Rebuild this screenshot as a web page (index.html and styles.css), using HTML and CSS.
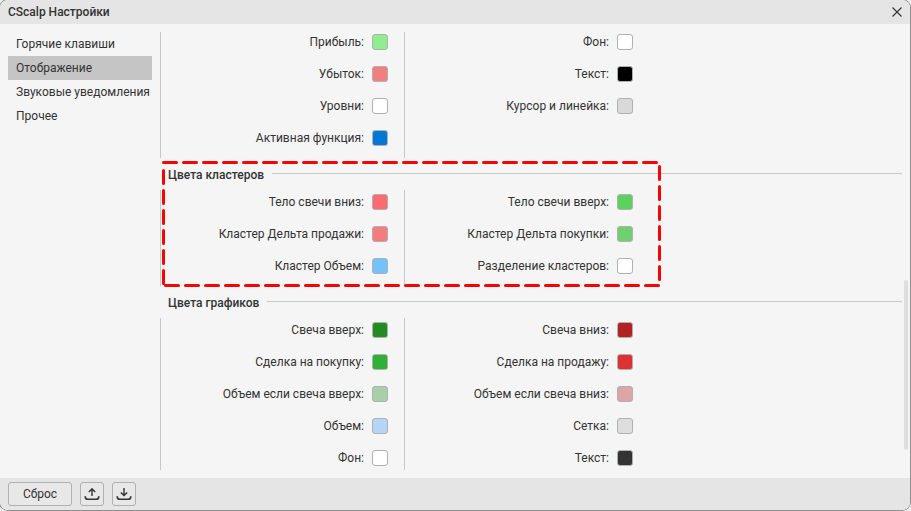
FILE: index.html
```html
<!DOCTYPE html>
<html lang="ru">
<head>
<meta charset="utf-8">
<title>CScalp Настройки</title>
<link rel="stylesheet" href="styles.css">
</head>
<body>
<div class="window">
  <header class="titlebar">
    <span class="title">CScalp Настройки</span>
    <svg class="close" width="10" height="10" viewBox="0 0 10 10"><path d="M.5.5l9 9M9.5.5l-9 9" stroke="#333" stroke-width="1.1" fill="none"/></svg>
  </header>
  <div class="body">
    <nav class="nav">
      <div class="nav-item">Горячие клавиши</div>
      <div class="nav-item active">Отображение</div>
      <div class="nav-item">Звуковые уведомления</div>
      <div class="nav-item">Прочее</div>
    </nav>
    <main class="content">
      <section class="grid first">
        <div class="col">
          <div class="row"><span>Прибыль:</span><i class="sw c-profit"></i></div>
          <div class="row"><span>Убыток:</span><i class="sw c-loss"></i></div>
          <div class="row"><span>Уровни:</span><i class="sw c-white"></i></div>
          <div class="row"><span>Активная функция:</span><i class="sw c-active"></i></div>
        </div>
        <div class="col">
          <div class="row"><span>Фон:</span><i class="sw c-white"></i></div>
          <div class="row"><span>Текст:</span><i class="sw c-black"></i></div>
          <div class="row"><span>Курсор и линейка:</span><i class="sw c-cursor"></i></div>
        </div>
      </section>
      <h3 class="heading"><span class="heading-text">Цвета кластеров</span></h3>
      <section class="grid">
        <div class="col">
          <div class="row"><span>Тело свечи вниз:</span><i class="sw c-cdown"></i></div>
          <div class="row"><span>Кластер Дельта продажи:</span><i class="sw c-dsell"></i></div>
          <div class="row"><span>Кластер Объем:</span><i class="sw c-cvol"></i></div>
        </div>
        <div class="col">
          <div class="row"><span>Тело свечи вверх:</span><i class="sw c-cup"></i></div>
          <div class="row"><span>Кластер Дельта покупки:</span><i class="sw c-dbuy"></i></div>
          <div class="row"><span>Разделение кластеров:</span><i class="sw c-white"></i></div>
        </div>
      </section>
      <h3 class="heading"><span class="heading-text">Цвета графиков</span></h3>
      <section class="grid last">
        <div class="col">
          <div class="row"><span>Свеча вверх:</span><i class="sw c-gup"></i></div>
          <div class="row"><span>Сделка на покупку:</span><i class="sw c-buy"></i></div>
          <div class="row"><span>Объем если свеча вверх:</span><i class="sw c-volup"></i></div>
          <div class="row"><span>Объем:</span><i class="sw c-vol"></i></div>
          <div class="row"><span>Фон:</span><i class="sw c-white"></i></div>
        </div>
        <div class="col">
          <div class="row"><span>Свеча вниз:</span><i class="sw c-gdown"></i></div>
          <div class="row"><span>Сделка на продажу:</span><i class="sw c-sell"></i></div>
          <div class="row"><span>Объем если свеча вниз:</span><i class="sw c-voldown"></i></div>
          <div class="row"><span>Сетка:</span><i class="sw c-grid"></i></div>
          <div class="row"><span>Текст:</span><i class="sw c-text"></i></div>
        </div>
      </section>
      <div class="scrollbar"></div>
    </main>
  </div>
  <footer class="footer">
    <button class="btn reset">Сброс</button>
    <button class="btn icon" aria-label="Экспорт">
      <svg width="16" height="14" viewBox="0 0 16 14" fill="none" stroke="#333" stroke-width="1.4"><path d="M8 9V2M4.8 5 8 1.8 11.2 5"/><path d="M1.2 9.2c0 2 1 3.1 2.6 3.1h8.4c1.6 0 2.6-1.1 2.6-3.1" stroke-width="1.6"/></svg>
    </button>
    <button class="btn icon" aria-label="Импорт">
      <svg width="16" height="14" viewBox="0 0 16 14" fill="none" stroke="#333" stroke-width="1.4"><path d="M8 1v7.4M4.8 5.4 8 8.6l3.2-3.2"/><path d="M1.2 9.2c0 2 1 3.1 2.6 3.1h8.4c1.6 0 2.6-1.1 2.6-3.1" stroke-width="1.6"/></svg>
    </button>
  </footer>
  <svg class="highlight" width="504" height="130" viewBox="0 0 504 130"><path d="M3.5 3.5H499.5M499.5 7.5V125M3.5 124.5V7M5.5 126.5H500" fill="none" stroke="#ff0000" stroke-width="3" stroke-linecap="round" stroke-dasharray="13 7"/></svg>
</div>
</body>
</html>
```
FILE: styles.css
```css
* { box-sizing: border-box; }
html, body { margin: 0; height: 100%; }
body {
  width: 911px;
  height: 511px;
  overflow: hidden;
  background: #eeeeee;
  font-family: Roboto, "Liberation Sans", sans-serif;
  font-size: 12px;
  color: #333;
}
.window {
  position: relative;
  width: 910px;
  height: 510px;
  background: #f5f5f5;
  border-radius: 8px;
  box-shadow: 0 0 0 1px #8f8f8f;
  overflow: hidden;
  display: flex;
  flex-direction: column;
}
.titlebar {
  flex: none;
  height: 24px;
  background: #e5e5e5;
  padding: 0 8px;
  display: flex;
  align-items: center;
  justify-content: space-between;
}
.title { font-weight: 500; font-size: 12px; }
.body { flex: 1; display: flex; min-height: 0; }
.nav { flex: none; width: 160px; padding: 8px 8px 0; }
.nav-item { height: 24px; line-height: 24px; padding-left: 8px; }
.nav-item.active { background: #c5c5c5; }
.content {
  position: relative;
  flex: 1;
  min-width: 0;
  padding-top: 8px;
}
.grid {
  display: grid;
  grid-template-columns: 244px 229px;
}
.col {
  display: flex;
  flex-direction: column;
  gap: 16px;
  padding: 4px 0 12px;
  border-left: 1px solid #c8c8c8;
}
.first .col { padding-top: 2px; }
.last .col { padding-bottom: 4px; }
.row {
  height: 16px;
  display: flex;
  align-items: center;
  justify-content: flex-end;
  gap: 8px;
}
.col:first-child .row { padding-right: 16px; }
.sw {
  display: block;
  width: 16px;
  height: 16px;
  border: 1px solid #b0b0b0;
  border-radius: 3px;
  flex: none;
}
.heading {
  margin: 8px 0 8px 8px;
  width: 734px;
  height: 16px;
  font-size: 12px;
  font-weight: 500;
  display: flex;
  align-items: center;
  gap: 8px;
}
.heading-text { padding-top: 1px; }
.heading::after { content: ""; flex: 1; height: 1px; background: #c8c8c8; margin-top: -1px; }
.scrollbar {
  position: absolute;
  left: 744px;
  top: 256px;
  width: 4px;
  height: 170px;
  background: #dedede;
  border-radius: 2px;
}
.footer {
  flex: none;
  height: 32px;
  background: #e5e5e5;
  padding: 4px 8px;
  display: flex;
  gap: 8px;
}
.btn {
  height: 24px;
  border: 1px solid #b0b0b0;
  border-radius: 3px;
  background: #e8e8e8;
  font: inherit;
  color: #333;
  padding: 0;
  display: flex;
  align-items: center;
  justify-content: center;
}
.reset { width: 64px; }
.icon { width: 24px; }
.highlight { position: absolute; left: 160px; top: 159px; }
.c-profit { background: #90ee90; }
.c-loss { background: #f08080; }
.c-white { background: #fff; }
.c-active { background: #0078d4; }
.c-black { background: #000; }
.c-cursor { background: #d9d9d9; }
.c-cdown { background: #ff6b70; }
.c-dsell { background: #f27c80; }
.c-cvol { background: #73c2fb; }
.c-cup { background: #5dd15d; }
.c-dbuy { background: #70d070; }
.c-gup { background: #228b22; }
.c-buy { background: #2eb135; }
.c-volup { background: #a8cfa8; }
.c-vol { background: #b5d5f7; }
.c-gdown { background: #b22222; }
.c-sell { background: #dc3232; }
.c-voldown { background: #dda5a5; }
.c-grid { background: #dedede; }
.c-text { background: #333; }
```
